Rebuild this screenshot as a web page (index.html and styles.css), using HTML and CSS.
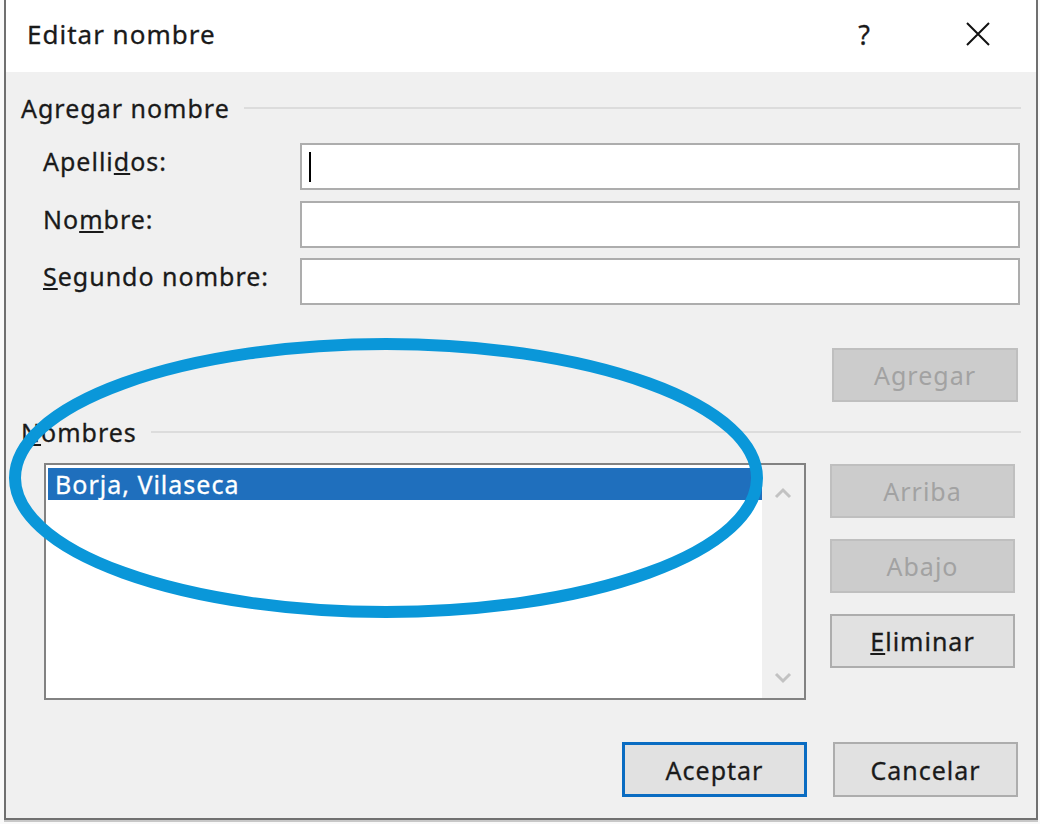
FILE: index.html
```html
<!DOCTYPE html>
<html lang="es">
<head>
    <meta charset="UTF-8">
    <title>Editar nombre</title>
    <link rel="stylesheet" href="styles.css">
</head>
<body>
    <div class="dialog">
        <!-- Title bar -->
        <header class="titlebar">
            <span class="title">Editar nombre</span>
            <span class="help">?</span>
            <svg class="close" width="26" height="26" viewBox="0 0 26 26">
                <path d="M2 2 L24 24 M24 2 L2 24" stroke="#111" stroke-width="2" fill="none"/>
            </svg>
        </header>

        <main class="content">
            <div class="group-head">
                <span>Agregar nombre</span>
                <div class="rule"></div>
            </div>

            <div class="form-grid">
                <label for="apellidos">Apelli<u>d</u>os:</label>
                <div class="field" id="apellidos"><span class="caret"></span></div>

                <label for="nombre">No<u>m</u>bre:</label>
                <div class="field" id="nombre"></div>

                <label for="segundo"><u>S</u>egundo nombre:</label>
                <div class="field" id="segundo"></div>
            </div>

            <div class="add-row">
                <button class="btn disabled">Agregar</button>
            </div>

            <div class="group-head names-head">
                <span><u>N</u>ombres</span>
                <div class="rule"></div>
            </div>

            <div class="list-row">
                <div class="listbox">
                    <div class="items">
                        <div class="item selected">Borja, Vilaseca</div>
                    </div>
                    <div class="scrollbar">
                        <svg width="20" height="12" viewBox="0 0 20 12">
                            <path d="M3 10 L10 3 L17 10" stroke="#c2c2c2" stroke-width="3" fill="none"/>
                        </svg>
                        <svg width="20" height="12" viewBox="0 0 20 12">
                            <path d="M3 2 L10 9 L17 2" stroke="#c2c2c2" stroke-width="3" fill="none"/>
                        </svg>
                    </div>
                </div>
                <div class="side-buttons">
                    <button class="btn disabled">Arriba</button>
                    <button class="btn disabled">Abajo</button>
                    <button class="btn"><u>E</u>liminar</button>
                </div>
            </div>

            <footer class="footer">
                <button class="btn default">Aceptar</button>
                <button class="btn">Cancelar</button>
            </footer>
        </main>
    </div>

    <!-- highlight drawn over the list -->
    <svg class="marker" width="1040" height="824" viewBox="0 0 1040 824">
        <ellipse cx="386" cy="478" rx="371" ry="134" stroke="#0a97d9" stroke-width="12" fill="none"/>
    </svg>
</body>
</html>
```

FILE: styles.css
```css
/* Dialog styles */
:root {
    --face: #f0f0f0;
    --btn-face: #e1e1e1;
    --btn-border: #adadad;
    --accent: #0a6cc2;
}

* {
    box-sizing: border-box;
    margin: 0;
    padding: 0;
}

body {
    font-family: 'Noto Sans', 'Open Sans', sans-serif;
    font-size: 25px;
    letter-spacing: 1px;
    -webkit-text-stroke: 0.3px;
    color: #1a1a1a;
    background-color: #fafafa;
    width: 1040px;
    height: 824px;
    overflow: hidden;
    position: relative;
}

.dialog {
    margin-left: 4px;
    width: 1034px;
    height: 820px;
    border: 2px solid #707070;
    border-top: none;
    background-color: var(--face);
    display: flex;
    flex-direction: column;
    box-shadow: 0 2px 0 #c8c8c8;
}

/* Title bar */
.titlebar {
    height: 72px;
    background: white;
    display: flex;
    align-items: center;
    padding-left: 21px;
    padding-bottom: 4px;
}

.title {
    flex: 1;
    font-size: 26px;
}

.help {
    font-size: 27px;
    margin-right: 94px;
}

.close {
    margin-right: 45px;
}

/* Content */
.content {
    padding: 22px 15px 0 15px;
    flex: 1;
}

.group-head {
    display: flex;
    align-items: center;
    height: 28px;
    gap: 14px;
}

.rule {
    flex: 1;
    height: 2px;
    background-color: #dcdcdc;
}

.form-grid {
    display: grid;
    grid-template-columns: 279px 1fr;
    grid-auto-rows: 47px;
    row-gap: 10.5px;
    margin-top: 21px;
    margin-right: 1px;
}

.form-grid label {
    padding-left: 22px;
    line-height: 36px;
}

.field {
    background: white;
    border: 2px solid #adadad;
    padding: 7px 7px;
}

.caret {
    display: block;
    width: 2px;
    height: 30px;
    background: #000;
}

.add-row {
    display: flex;
    justify-content: flex-end;
    margin-top: 43px;
    margin-right: 3px;
}

.btn {
    font-family: inherit;
    font-size: 25px;
    letter-spacing: 1px;
    color: #1a1a1a;
    width: 186px;
    height: 54px;
    background: var(--btn-face);
    border: 2px solid var(--btn-border);
}

.btn.disabled {
    background: #cccccc;
    border-color: #bfbfbf;
    color: #a2a2a2;
    -webkit-text-stroke: 0;
}

.btn.default {
    border: 3px solid var(--accent);
}

.names-head {
    margin-top: 16px;
}

/* Names list */
.list-row {
    display: flex;
    gap: 24px;
    margin-top: 17px;
}

.listbox {
    margin-left: 23px;
    width: 762px;
    height: 237px;
    border: 2px solid #828282;
    background: white;
    display: flex;
}

.items {
    flex: 1;
    padding: 3px 0 0 2px;
}

.item {
    height: 32px;
    line-height: 32px;
    padding-left: 7px;
}

.item.selected {
    background-color: #1f6fbd;
    color: white;
}

.scrollbar {
    width: 42px;
    background: var(--face);
    display: flex;
    flex-direction: column;
    justify-content: space-between;
    align-items: center;
    padding: 22px 0 14px;
}

.side-buttons {
    display: flex;
    flex-direction: column;
    gap: 21px;
    margin-top: 1px;
}

.side-buttons .btn {
    width: 185px;
}

.footer {
    display: flex;
    justify-content: flex-end;
    gap: 26px;
    margin-top: 42px;
    margin-right: 3px;
}

.footer .btn {
    height: 55px;
    width: 185px;
}

.marker {
    position: absolute;
    left: 0;
    top: 0;
    pointer-events: none;
}
```
